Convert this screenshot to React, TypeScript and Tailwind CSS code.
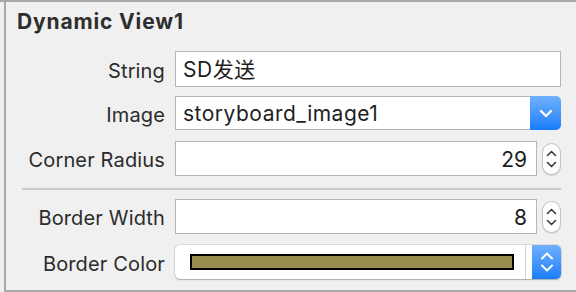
import React from "react";

const font = { fontFamily: "Inter, 'Noto Sans CJK SC', sans-serif" };

function Label({ children }: { children: React.ReactNode }) {
  return (
    <div className="w-[169px] shrink-0 pr-[10px] pt-[3px] text-right text-[20px] tracking-[0.15px] text-[#2b2b2b]" style={font}>
      {children}
    </div>
  );
}

function Stepper() {
  return (
    <div className="ml-[5px] flex h-[32px] w-[19px] flex-col items-center justify-center gap-[4px] rounded-[10px] border border-[#c4c4c4] bg-white shadow-[0_1px_1px_rgba(0,0,0,0.12)]">
      <svg width="11" height="7" viewBox="0 0 11 7" fill="none">
        <path d="M1.5 5.5 L5.5 1.5 L9.5 5.5" stroke="#3a3a3a" strokeWidth="1.6" strokeLinecap="round" strokeLinejoin="round" />
      </svg>
      <svg width="11" height="7" viewBox="0 0 11 7" fill="none">
        <path d="M1.5 1.5 L5.5 5.5 L9.5 1.5" stroke="#3a3a3a" strokeWidth="1.6" strokeLinecap="round" strokeLinejoin="round" />
      </svg>
    </div>
  );
}

export default function App() {
  return (
    <div className="h-[292px] w-[576px] overflow-hidden border-t-2 border-[#a9a9a9] bg-[#f0f0f0]">
      <div className="ml-[4px] flex h-[290px] flex-col border-b-2 border-l-2 border-[#a9a9a9]">
        <div className="ml-[11px] mt-[8px] h-[24px] text-[21px] font-bold leading-[24px] tracking-[0.85px] text-[#2e2e2e]" style={font}>
          Dynamic View1
        </div>

        {/* String */}
        <div className="mt-[17px] flex h-[36px] items-center">
          <Label>String</Label>
          <div className="flex h-[36px] w-[386px] items-center border border-[#b6b6b6] bg-white pl-[7px] pt-[2px] text-[21px] tracking-[0.5px] text-[#1e1e1e]" style={font}>
            SD发送
          </div>
        </div>

        {/* Image */}
        <div className="mt-[9px] flex h-[34px] items-center">
          <Label>Image</Label>
          <div className="flex h-[34px] w-[386px] items-stretch">
            <div className="flex flex-1 items-center border border-r-0 border-[#b6b6b6] bg-white pl-[7px] pt-[2px] text-[21px] tracking-[0.5px] text-[#1e1e1e]" style={font}>
              storyboard_image1
            </div>
            <div className="flex w-[31px] items-center justify-center rounded-r-[5px] bg-gradient-to-b from-[#6db1fe] to-[#167cf9]">
              <svg width="14" height="9" viewBox="0 0 14 9" fill="none">
                <path d="M2 2 L7 7 L12 2" stroke="white" strokeWidth="2.4" strokeLinecap="round" strokeLinejoin="round" />
              </svg>
            </div>
          </div>
        </div>

        {/* Corner Radius */}
        <div className="mt-[11px] flex h-[35px] items-center">
          <Label>Corner Radius</Label>
          <div className="flex h-[35px] w-[362px] items-center justify-end border border-[#b6b6b6] bg-white pr-[9px] pt-[2px] text-[21px] text-[#1e1e1e]" style={font}>
            29
          </div>
          <Stepper />
        </div>

        {/* separator */}
        <div className="ml-[16px] mr-[15px] mt-[12px] h-[2px] bg-[#cbcbcb]" />

        {/* Border Width */}
        <div className="mt-[9px] flex h-[35px] items-center">
          <Label>Border Width</Label>
          <div className="flex h-[35px] w-[362px] items-center justify-end border border-[#b6b6b6] bg-white pr-[9px] pt-[2px] text-[21px] text-[#1e1e1e]" style={font}>
            8
          </div>
          <Stepper />
        </div>

        {/* Border Color */}
        <div className="mt-[11px] flex h-[34px] items-center">
          <Label>Border Color</Label>
          <div className="flex h-[34px] w-[386px] items-stretch overflow-hidden rounded-[5px] bg-white shadow-[0_0_0_0.5px_rgba(0,0,0,0.18),0_1px_1.5px_rgba(0,0,0,0.22)]">
            <div className="flex flex-1 items-center border-r border-[#d4d4d4] pl-[15px] pr-[10px]">
              <div className="h-[16px] w-[324px] border-2 border-black bg-[#998b4d]" />
            </div>
            <div className="ml-[6px] flex w-[29px] flex-col items-center justify-center gap-[4px] bg-gradient-to-b from-[#6db1fe] to-[#167cf9]">
              <svg width="14" height="8" viewBox="0 0 14 8" fill="none">
                <path d="M2 6.5 L7 1.5 L12 6.5" stroke="white" strokeWidth="2" strokeLinecap="round" strokeLinejoin="round" />
              </svg>
              <svg width="14" height="8" viewBox="0 0 14 8" fill="none">
                <path d="M2 1.5 L7 6.5 L12 1.5" stroke="white" strokeWidth="2" strokeLinecap="round" strokeLinejoin="round" />
              </svg>
            </div>
          </div>
        </div>
      </div>
    </div>
  );
}
